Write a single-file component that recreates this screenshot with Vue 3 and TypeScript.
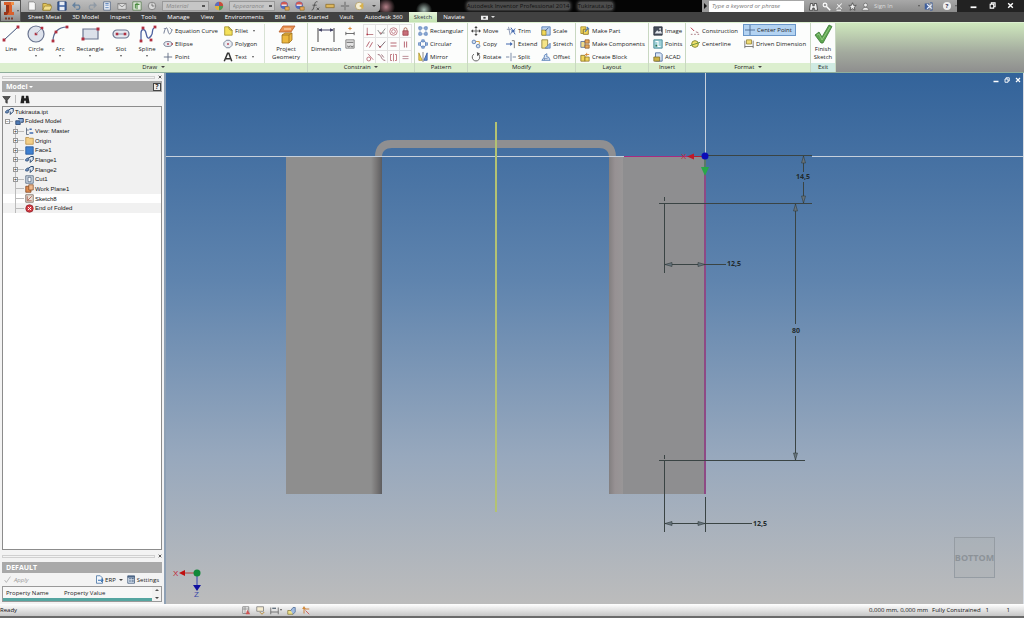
<script setup lang="ts">
import { h, ref } from 'vue'

/* A shape is [path data, fill, stroke, stroke width]. */
type Shape = [string, string, string?, number?]

const navy = '#3c5078'
const red = '#b03040'
const blue = '#4f79b5'

const dot = (x: number, y: number, r = 1): string =>
  `M${x - r} ${y - r}h${2 * r}v${2 * r}h${-2 * r}z`
const ring = (x: number, y: number, r: number): string =>
  `M${x - r} ${y}a${r} ${r} 0 1 0 ${2 * r} 0a${r} ${r} 0 1 0 ${-2 * r} 0z`

const icons: Record<string, Shape[]> = {
  /* large, 20 x 20 */
  line: [['M3 16L17 3', 'none', navy, 1], [dot(3, 16, 1.4), red], [dot(17, 3, 1.4), red]],
  circle: [[ring(10, 10, 8), '#dde2ec', '#6a7590', 1.2], [dot(10, 10, 1.3), red], ['M10 10l5 -5', 'none', '#8a93a8', 0.8], [dot(16, 4, 1.3), red]],
  arc: [['M3 17C3 9 8 3 17 3', 'none', '#5a6b92', 1.2], [dot(3, 17, 1.4), red], [dot(6, 8, 1.4), red], [dot(17, 3, 1.4), red]],
  rectangle: [['M3 5h15v10h-15z', '#dce1ea', '#6b7690', 1.2], [dot(3, 15, 1.5), red], [dot(18, 5, 1.5), red]],
  slot: [['M6 6h8a4 4 0 0 1 0 8h-8a4 4 0 0 1 0 -8z', '#e4e8ef', '#6b7690', 1.2], ['M6 10h8', 'none', '#8a93a8', 1], [dot(6, 10, 1.3), red], [dot(14, 10, 1.3), red]],
  spline: [['M4 17V9C4 5 8 4 9 9S11 16 14 12S14 6 17 4', 'none', '#4d62a0', 1.3], [dot(4, 17, 1.4), red], [dot(6, 4, 1.4), red], [dot(14, 16, 1.4), red], [dot(18, 3, 1.4), red]],
  project: [['M7 2h12l-4 6h-12z', '#e99252', '#b8602b', 0.8], ['M8 5h7', 'none', '#f8d0a8', 1.4], ['M6 11l3 -2h7v7l-3 3h-7z', '#edb83f', '#9c6f1e', 0.8], ['M6 11h7v8M13 11l3 -2', 'none', '#9c6f1e', 0.8]],
  dimension: [['M2 4v14M18 4v14', 'none', '#555', 1.1], ['M3 6h14', 'none', '#446', 1], ['M2 6l4 -1.8v3.6zM18 6l-4 -1.8v3.6z', '#446']],
  finish: [['M2 11l4 -3l3 5L16 1l3 1.5L10 19h-2z', '#5fa650', '#387a33', 0.8], ['M4 11l2 -1l3 6L17 3', 'none', '#9ad08a', 0.8]],
  /* small, 12 x 12 */
  eqcurve: [['M1 9C3 0 5 1 6 6S9 11 11 4', 'none', '#68738c', 1.1], ['M1 3h3M8 2l3 3', 'none', '#68738c', 0.8]],
  ellipse: [['M1 6a5 3 0 1 0 10 0a5 3 0 1 0 -10 0z', '#e8ebf1', '#68738c', 1], [dot(6, 6), red], [dot(11, 6, 0.8), red]],
  point: [['M6 1v10M1 6h10', 'none', '#56617c', 1]],
  fillet: [['M2 1h5l4 4v6h-9z', '#f4e15a', '#a3922c', 1], ['M7 1c0 3 1 4 4 4', 'none', '#7f7642', 1]],
  polygon: [['M4 1.5h4l3 3v3l-3 3h-4l-3 -3v-3z', '#e9ecf2', '#68738c', 1], [dot(6, 6), red]],
  textA: [['M1.5 11L5.5 1.5H7L10.5 11M3.5 8h5', 'none', '#333', 1.8]],
  dimAuto: [['M1 9h10M1 7v4M11 7v4', 'none', '#555', 1], ['M6 1v4M4 3h4', 'none', '#d98c3a', 1.2]],
  dimShow: [['M1 1h10v10h-10z', '#e3e3e3', '#777', 1], ['M2 4h8M3 8a1.3 1.3 0 1 0 3 0M7 8a1.3 1.3 0 1 0 3 0', 'none', '#555', 1]],
  cCoin: [['M3 1v9h8', 'none', '#b06a72', 1.1], [dot(3, 10), red]],
  cCol: [['M1 4l4 6L11 2M7 8h3', 'none', '#777', 1.1], [dot(5, 8, 0.8), red]],
  cConc: [[ring(6, 6, 5), 'none', '#b6606c', 1], [ring(6, 6, 2.5), 'none', '#b6606c', 1]],
  cFix: [['M2.5 5h7v6h-7z', '#c8707a', '#9c3c48', 1], ['M4 5V3a2 2 0 0 1 4 0v2', 'none', '#9c5c48', 1.1]],
  cPar: [['M2 9l4 -7M6 10l4 -7', 'none', '#b05864', 1.2]],
  cPerp: [['M1 6l3 4L11 2', 'none', '#75606a', 1.2], [dot(4, 9, 0.9), red]],
  cHor: [['M2 4h8M2 8h8', 'none', '#b05864', 1.2]],
  cVer: [['M4.5 2v8M7.5 2v8', 'none', '#b05864', 1.2]],
  cTan: [[ring(5, 8, 2.6), 'none', '#b05864', 1], ['M4 1l7 8', 'none', '#b05864', 1]],
  cSmooth: [['M1 2C7 2 4 9 11 10M6 2l3 4', 'none', '#8a5864', 1.1]],
  cSym: [['M4 2H2v8h2M8 2h2v8H8M6 1v10', 'none', '#b05864', 1]],
  cEq: [['M2 4.5h8M2 7.5h8', 'none', '#b07884', 1.1]],
  patRect: [['M1 1h3v3h-3zM8 1h3v3h-3zM1 8h3v3h-3zM8 8h3v3h-3z', '#9db8e0', blue, 0.9], ['M5 2.5h2M5 9.5h2M2.5 5v2M9.5 5v2', 'none', blue, 0.8]],
  patCirc: [[ring(6, 6, 3.6), 'none', '#708cc0', 1], ['M4.5 1h3v2.5h-3zM4.5 8.5h3v2.5h-3zM.5 4.5h2.5v3h-2.5zM9 4.5h2.5v3h-2.5z', '#9db8e0', blue, 0.8]],
  mirror: [['M1 1l4 9H1z', '#f0d654', '#a88e28', 0.9], ['M11 1L7 10h4z', '#5f8cd4', '#2e539c', 0.9], ['M6 0v12', 'none', '#555', 0.8]],
  move: [['M6 1v10M1 6h10', 'none', '#555', 1], ['M6 0l2 2.5H4zM6 12l2 -2.5H4zM0 6l2.5 -2v4zM12 6l-2.5 -2v4z', '#444']],
  copy: [[ring(3.5, 3.5, 2.2), '#cbdcf2', '#5878ac', 1], [ring(8.5, 8.5, 2.2), '#cbdcf2', '#5878ac', 1], ['M6 3h4v3', 'none', '#d09830', 1]],
  rotate: [['M3.5 2.5a4.5 4.5 0 1 0 5 0', 'none', '#555', 1.1], ['M7 0l4 2.2L7.5 5z', '#555']],
  trim: [['M1 4h5M3 1l2 10', 'none', '#8593b0', 1.1], ['M6 2l5 8M6 9l5 -6M6 6h5', 'none', '#3f65ac', 1.2]],
  extend: [['M0 6h6', 'none', '#3f65ac', 1.2], ['M5 3.5l3 2.5l-3 2.5z', '#3f65ac'], ['M7 2h3v9', 'none', '#777', 1.1]],
  split: [['M0 6h4M8 6h4M6 1v10', 'none', '#667799', 1]],
  scale: [['M1 1h10v10h-10z', '#b9d0ee', blue, 1], ['M1 5h5v6h-5z', '#f1d95a', '#a28a2c', 0.9], ['M5 6l4 -4', 'none', '#34568c', 1]],
  stretch: [['M1 1h7v10h-7z', '#f4e487', '#8a7c38', 1], ['M5 11L11 5v6z', '#9cbbe5', blue, 0.9]],
  offset: [['M1 10h10l-2 -4h-2v-4l-3 2v2z', '#dce7f5', blue, 1], ['M4 8h4M4 10V7', 'none', '#6a86b4', 1]],
  makePart: [['M1 1h6v3h-3v5h-3z', '#f1d55a', '#a28a2c', 1], ['M4 4h6v6h-6z', '#f1d55a', '#8b7428', 1], ['M8 1l3 3M6 7l4 -5', 'none', '#4f79b5', 1.4]],
  makeComp: [['M1 3h5v7h-5z', '#f1dc8a', '#5a6f9c', 1], ['M6 1h5v4h-5zM6 7h5v4h-5z', '#e7a85a', '#8c5a2c', 0.9]],
  block: [['M1 4h5v7h-5z', '#f1d55a', '#8b7428', 1], ['M6 6h5v5h-5z', '#f1d55a', '#8b7428', 0.9], ['M8 1v4M6 3h5', 'none', '#d98a38', 1.1]],
  image: [['M1 1h10v10h-10z', '#474f5c', '#2c333e', 1], ['M2 9l3 -4l2 2l2 -2l2 4z', '#e6e9ef'], [ring(8.5, 3.5, 1), '#fff']],
  points: [['M1 1h10v10h-10z', '#9fd0d8', '#3c8390', 1], ['M3 3h3v6h3', 'none', '#fff', 1.3], [dot(4, 8), '#2f6f46']],
  acad: [['M3 1h6l2 2v8h-8z', '#d9e5f5', '#48699c', 1], ['M1 6h7v5h-7z', '#cdb346', '#7b6a23', 0.9]],
  construction: [['M1 2l4 4', 'none', red, 1.1], ['M1 10h2M5 10h2M9 10h2M7 7l3 1', 'none', '#9d6870', 1]],
  centerline: [[ring(6, 6, 4), '#f1e16a', '#8b8f39', 1.2], ['M0 8L12 4', 'none', '#55853d', 1]],
  center: [['M6 0v12M0 6h12', 'none', '#45608a', 1]],
  driven: [['M1 2v9M11 2v9M1 9h10', 'none', '#666', 1], ['M3 1h6v5h-6z', '#f0dc74', '#8b7b32', 0.9]],
  /* browser tree */
  part: [['M0 7l3 -3h3l-2 4h-3z', '#6f8fbc', '#26456f', 1], ['M5 4l3 -2h3v4l-4 4V6', '#dfe8f3', '#26456f', 1.3]],
  folded: [['M1 5h6v5h-6z', '#4e7ab4', '#213c66', 1], ['M4 2h7v5h-3', '#89a9d4', '#213c66', 1.2]],
  view: [['M2 1v9h3M2 4h3', 'none', '#44546c', 1], ['M6 8h5M6 3h3', 'none', '#3f6bb0', 1.8]],
  folder: [['M1 2h4l1 1h5v8h-10z', '#f3cf88', '#b68b3f', 1]],
  face: [['M1 1h10v10h-10z', '#3f80d0', '#204f90', 1]],
  cut: [['M1 1h10v10h-10z', '#cfd9e4', '#4c5f78', 1], ['M4 3h4v6h-4z', '#fff', '#4c5f78', 1]],
  plane: [['M1 3h7v8h-7z', '#de8a4e', '#7c4420', 1], ['M5 1h6v7h-6z', '#efb88c', '#7c4420', 0.9]],
  sketch: [['M1 1h10v10h-10z', '#e7ded6', '#6c5c50', 1], ['M3 3v6h6M4 8l5 -5', 'none', '#a44a38', 1]],
  end: [[ring(6, 6, 5), '#d33c44', '#8b2028', 1], ['M4 4l4 4M8 4l-4 4', 'none', '#fff', 1.3]],
  filter: [['M1 2h10L7 7v4l-2 -1V7z', '#555', '#222', 0.8]],
  binoc: [['M2 2h3v3h2V2h3l1.5 9H7V8H5v3H.5z', '#222']],
  apply: [['M1 7l3 4L11 1', 'none', '#a8a8a8', 1.3]],
  erp: [['M2 1h5l3 3v7h-8z', '#f3f7fc', '#3c6a9c', 1], ['M4 7h6M8 5l3 2l-3 2', 'none', '#2c6ab0', 1.3]],
  settings: [['M1 1h9v10h-9z', '#dbe6f2', '#3d5677', 1], ['M1 2.5h9M3 5h2M3 8h2M6 5h3M6 8h3', 'none', '#28456c', 1.4]],
  /* title bar */
  newDoc: [['M2 1h6l2 2v8h-8z', '#f6f6f6', '#777', 0.9]],
  open: [['M1 3h4l1 1h4v7h-9z', '#e8c95a', '#8b7428', 0.9], ['M3 6h9l-2 5h-9z', '#f3df8c', '#8b7428', 0.8]],
  save: [['M1 1h10v10h-10z', '#3c5f9e', '#233e70', 1], ['M3 1h6v4h-6zM3 7h6v4h-6z', '#e8edf5']],
  undo: [['M2 5h6a3 3 0 0 1 0 5H5', 'none', '#66829f', 1.6], ['M0 5l4 -4v8z', '#66829f']],
  redo: [['M10 5H4a3 3 0 0 0 0 5h3', 'none', '#909aa5', 1.4], ['M12 5L8 1v8z', '#909aa5']],
  sheet: [['M2 1h8v10h-8z', '#e8edf5', '#5b6d88', 1], ['M4 3h4M4 5h4M4 8h4', 'none', blue, 1]],
  mail: [['M1 3h10v7h-10z', '#dcdcdc', '#777', 0.9], ['M1 3l5 4l5 -4', 'none', '#777', 0.9]],
  update: [['M1 1h10v10h-10z', '#e3ecdf', '#5c8053', 1], ['M4 9V4h5M6 2v8', 'none', '#4a8a40', 1.3]],
  clock: [[ring(6, 6, 4.5), '#d8d8d8', '#777', 1], ['M6 3v3h3', 'none', '#666', 1]],
  ball: [[ring(6, 6, 5), '#e0b23c'], ['M6 1a5 5 0 0 1 5 5H6z', '#c64b3f'], ['M1 6a5 5 0 0 1 5 -5v5z', '#5b6cc0'], ['M6 11a5 5 0 0 0 5 -5H6z', '#4d9a5a']],
  ballEdit: [[ring(5, 5, 4.5), '#506ac0'], ['M1 5a4 4 0 0 1 8 0z', '#d05a54'], ['M2 5h6', 'none', '#fff', 1.5], ['M6 7h5v4h-5z', '#e8a85a', '#8a6b20', 0.7]],
  cone: [[ring(5, 6, 4.5), '#f4edd2', '#a89050', 0.8], ['M5 6l5 -4v8z', '#d9b24c']],
  plus: [['M6 1v10M1 6h10', 'none', '#8b8b8b', 2.2]],
  fx: [['M9 1C6 0 6 3 5 6S4 11 2 11M3 5h5M8 8l3 3M11 8l-3 3', 'none', '#444', 1]],
  measure: [['M1 4h10v4h-10z', '#dcb65c', '#8b6c2a', 0.9]],
  binocLight: [['M2 2h3v3h2V2h3l1.5 9H7V8H5v3H.5z', '#f0f0f0', '#333', 1]],
  key: [[ring(4, 4, 2.5), 'none', '#fff', 1.5], ['M6 6l5 5', 'none', '#fff', 2]],
  dish: [['M2 9l7 -7M3 3l6 6M2 11h6', 'none', '#f4f4f4', 1.4]],
  star: [['M6 1l1.5 3.5H11L8.3 7l1 4L6 8.8L2.7 11l1 -4L1 4.5h3.5z', '#eee', '#444', 1]],
  user: [[ring(6, 4, 2.5), '#eee', '#555', 0.8], ['M1.5 11c0 -5 9 -5 9 0z', '#eee', '#555', 0.8]],
  exchange: [['M1 2h6v8h-6z', '#3f5f9c'], ['M4 3l7 6M11 3l-7 6', 'none', '#e8eefa', 1.6], ['M8 1h3v10h-3', 'none', '#3f5f9c', 1]],
  minimize: [['M1 9h10', 'none', '#fff', 3]],
  restore: [['M4 4V1.5h6.5V8H8M2 4h6v6.5h-6z', 'none', '#fff', 1.8]],
  close: [['M2 2l8 8M10 2l-8 8', 'none', '#fff', 2.4]],
  closeDark: [['M2 2l8 8M10 2l-8 8', 'none', '#222', 2.2]],
  tabBox: [['M0 3h12v7h-12z', '#eee'], ['M4 5h4v3h-4z', '#444']],
  /* status bar */
  stGrid: [['M1 1h8v9h-8z', '#f2f2f2', '#777', 1], ['M1 4h8M4 1v9', 'none', '#777', 0.9], ['M7 5l4 6H5z', '#c55']],
  stSnap: [['M1 1h9v6h-9z', '#f5ecd0', '#777', 1], ['M5 8l3 3l3 -3', 'none', '#b8862c', 1.2]],
  stDim: [['M1 2v9M11 2v9M1 8h10', 'none', '#555', 1], ['M3 3h5', 'none', '#456', 1.5]],
  stSlice: [['M1 6h7v5h-7z', '#efe28c', '#7a6d30', 0.9], ['M5 6l3 -4h3v6l-3 3', '#9fb9e0', '#40608c', 0.9]],
  stDof: [['M4 10V4h7', 'none', '#c9772c', 1.2], ['M4 0l2.5 4h-5z', '#d08838'], ['M6 6l5 5', 'none', '#c55', 1.2]],
}

const largeNames = ['line', 'circle', 'arc', 'rectangle', 'slot', 'spline', 'project', 'dimension', 'finish']

const Icon = (props: { name: string; size?: number | string }) => {
  const box = largeNames.includes(props.name) ? 20 : 12
  const size = props.size ?? (box === 20 ? 20 : 10)
  return h(
    'svg',
    { width: size, height: size, viewBox: `0 0 ${box} ${box}`, 'aria-hidden': 'true' },
    icons[props.name].map(([d, fill, stroke, width]) =>
      h('path', { d, fill, stroke: stroke ?? 'none', 'stroke-width': width ?? 0 }),
    ),
  )
}
Icon.props = ['name', 'size']

interface Tool { icon: string; label: string; menu?: boolean; on?: boolean }
const t = (icon: string, label: string, menu = false, on = false): Tool => ({ icon, label, menu, on })

const tabs = ['Sheet Metal', '3D Model', 'Inspect', 'Tools', 'Manage', 'View', 'Environments', 'BIM', 'Get Started', 'Vault', 'Autodesk 360', 'Sketch', 'Naviate']
const activeTab = ref('Sketch')

const drawLarge = [t('line', 'Line'), t('circle', 'Circle', true), t('arc', 'Arc', true), t('rectangle', 'Rectangle', true), t('slot', 'Slot', true), t('spline', 'Spline', true)]
const drawSmall = [
  [t('eqcurve', 'Equation Curve'), t('ellipse', 'Ellipse'), t('point', 'Point')],
  [t('fillet', 'Fillet', true), t('polygon', 'Polygon'), t('textA', 'Text', true)],
]
const constraints = [
  ['cCoin', 'Coincident'], ['cCol', 'Collinear'], ['cConc', 'Concentric'], ['cFix', 'Fix'],
  ['cPar', 'Parallel'], ['cPerp', 'Perpendicular'], ['cHor', 'Horizontal'], ['cVer', 'Vertical'],
  ['cTan', 'Tangent'], ['cSmooth', 'Smooth'], ['cSym', 'Symmetric'], ['cEq', 'Equal'],
]
const groups = [
  { name: 'Pattern', key: 'pattern', menu: false, columns: [[t('patRect', 'Rectangular'), t('patCirc', 'Circular'), t('mirror', 'Mirror')]] },
  { name: 'Modify', key: 'modify', menu: false, columns: [
    [t('move', 'Move'), t('copy', 'Copy'), t('rotate', 'Rotate')],
    [t('trim', 'Trim'), t('extend', 'Extend'), t('split', 'Split')],
    [t('scale', 'Scale'), t('stretch', 'Stretch'), t('offset', 'Offset')],
  ] },
  { name: 'Layout', key: 'layout', menu: false, columns: [[t('makePart', 'Make Part'), t('makeComp', 'Make Components'), t('block', 'Create Block')]] },
  { name: 'Insert', key: 'insert', menu: false, columns: [[t('image', 'Image'), t('points', 'Points'), t('acad', 'ACAD')]] },
  { name: 'Format', key: 'format', menu: true, columns: [
    [t('construction', 'Construction'), t('centerline', 'Centerline')],
    [t('center', 'Center Point', false, true), t('driven', 'Driven Dimension')],
  ] },
]

const tree = [
  { icon: 'part', label: 'Tukirauta.ipt', level: 0, box: '' },
  { icon: 'folded', label: 'Folded Model', level: 1, box: '−' },
  { icon: 'view', label: 'View: Master', level: 2, box: '+' },
  { icon: 'folder', label: 'Origin', level: 2, box: '+' },
  { icon: 'face', label: 'Face1', level: 2, box: '+' },
  { icon: 'part', label: 'Flange1', level: 2, box: '+' },
  { icon: 'part', label: 'Flange2', level: 2, box: '+' },
  { icon: 'cut', label: 'Cut1', level: 2, box: '+' },
  { icon: 'plane', label: 'Work Plane1', level: 2, box: '' },
  { icon: 'sketch', label: 'Sketch8', level: 2, box: '' },
  { icon: 'end', label: 'End of Folded', level: 2, box: '' },
]
const selected = ref('Sketch8')

const quick = ['newDoc', 'open', 'save', 'undo', 'redo', 'sheet', 'mail', 'update', 'clock']
const quickRight = ['ballEdit', 'fx', 'measure', 'plus', 'cone']
const material = ref('Material')
const appearance = ref('Appearance')
const search = ref('')
const statusTools = ['stGrid', 'stSnap', 'stDim', 'stSlice', 'stDof']
</script>

<template>
  <div class="window">
    <header class="top">
      <button class="app" aria-label="Application menu">
        <svg width="14" height="20" viewBox="0 0 14 20" aria-hidden="true">
          <path d="M2 1h10v3h-2v7h2v3H2v-3h2V4H2z" fill="#d9602c" />
          <path d="M4 4h3v7H4zM2 11h5l-2 3H2z" fill="#98351a" />
          <path d="M9 1h3v3h-3z" fill="#f09048" />
          <path d="M3 17.500h8" stroke="#7c3c2c" stroke-width="2" stroke-dasharray="2 1" />
        </svg>
        <i class="caret"></i>
      </button>
      <div class="bars">
        <div class="title-bar">
          <div class="quick">
            <button v-for="q in quick" :key="q" :aria-label="q"><Icon :name="q" /></button>
            <select v-model="material" aria-label="Material"><option>Material</option></select>
            <Icon name="ball" />
            <select v-model="appearance" aria-label="Appearance"><option>Appearance</option></select>
            <Icon name="ballEdit" />
            <button v-for="q in quickRight" :key="q" :aria-label="q"><Icon :name="q" /></button>
            <i class="caret dark"></i>
          </div>
          <div class="caption">
            <span>Autodesk Inventor Professional 2014</span><span>Tukirauta.ipt</span>
          </div>
          <div class="info">
            <button class="expand" aria-label="Collapse search"><i class="arrow"></i></button>
            <input v-model="search" type="search" placeholder="Type a keyword or phrase" aria-label="Search" />
            <button v-for="q in ['binocLight', 'key', 'dish', 'star', 'user']" :key="q" :aria-label="q"><Icon :name="q" size="9" /></button>
            <button class="sign">Sign In</button>
            <i class="caret"></i>
            <button aria-label="Exchange"><Icon name="exchange" size="9" /></button>
            <button class="help" aria-label="Help">?</button>
            <i class="caret"></i>
          </div>
          <div class="window-buttons">
            <button v-for="q in ['minimize', 'restore', 'close']" :key="q" :aria-label="q"><Icon :name="q" size="7" /></button>
          </div>
        </div>
        <nav class="tabs">
          <button v-for="tab in tabs" :key="tab" :class="{ active: tab === activeTab }" @click="activeTab = tab">{{ tab }}</button>
          <button class="tab-extra" aria-label="Ribbon display"><Icon name="tabBox" size="7" /><i class="caret light"></i></button>
        </nav>
      </div>
    </header>

    <section class="ribbon">
      <div class="group draw">
        <div class="tools">
          <div class="draw-large">
            <button v-for="b in drawLarge" :key="b.label" class="large">
              <Icon :name="b.icon" /><span>{{ b.label }}</span><i v-if="b.menu" class="caret"></i>
            </button>
          </div>
          <div v-for="(col, i) in drawSmall" :key="i" class="column">
            <button v-for="b in col" :key="b.label" class="small"><Icon :name="b.icon" />{{ b.label }}<i v-if="b.menu" class="caret"></i></button>
          </div>
          <button class="large project"><Icon name="project" /><span>Project</span><span>Geometry</span></button>
        </div>
        <h2>Draw <i class="caret dark"></i></h2>
      </div>
      <div class="group constrain">
        <div class="tools">
          <button class="large dim"><Icon name="dimension" /><span>Dimension</span></button>
          <div class="column pair">
            <button class="small" aria-label="Automatic dimensions"><Icon name="dimAuto" /></button>
            <button class="small" aria-label="Show constraints"><Icon name="dimShow" /></button>
          </div>
          <div class="matrix">
            <button v-for="c in constraints" :key="c[0]" :aria-label="c[1]"><Icon :name="c[0]" size="9" /></button>
          </div>
        </div>
        <h2>Constrain <i class="caret dark"></i></h2>
      </div>
      <div v-for="g in groups" :key="g.key" class="group" :class="g.key">
        <div class="tools">
          <div v-for="(col, i) in g.columns" :key="i" class="column">
            <button v-for="b in col" :key="b.label" class="small" :class="{ on: b.on }"><Icon :name="b.icon" />{{ b.label }}</button>
          </div>
        </div>
        <h2>{{ g.name }} <i v-if="g.menu" class="caret dark"></i></h2>
      </div>
      <div class="group exit">
        <div class="tools">
          <button class="large"><Icon name="finish" /><span>Finish</span><span>Sketch</span></button>
        </div>
        <h2>Exit</h2>
      </div>
    </section>

    <main>
      <aside>
        <div class="grip"><hr /><button aria-label="Close model browser"><Icon name="closeDark" size="4" /></button></div>
        <div class="panel-title"><span>Model <i class="caret white"></i></span><button class="panel-help" aria-label="Help">?</button></div>
        <div class="panel-tools">
          <button aria-label="Filter"><Icon name="filter" size="9" /></button>
          <hr />
          <button aria-label="Find"><Icon name="binoc" size="10" /></button>
        </div>
        <div class="browser">
          <ul>
            <li v-for="n in tree" :key="n.label" :class="['level' + n.level, { selected: n.label === selected }]" @click="selected = n.label">
              <span v-if="n.level" class="branch"><b v-if="n.box">{{ n.box }}</b></span>
              <Icon :name="n.icon" size="9" />{{ n.label }}
            </li>
          </ul>
        </div>
        <div class="grip second"><hr /><button aria-label="Close properties"><Icon name="closeDark" size="4" /></button></div>
        <div class="panel-title"><span>DEFAULT</span></div>
        <div class="property-tools">
          <button class="apply" disabled><Icon name="apply" size="7" />Apply</button>
          <button><Icon name="erp" size="9" />ERP <i class="caret dark"></i></button>
          <button><Icon name="settings" size="9" />Settings</button>
        </div>
        <div class="properties">
          <table><thead><tr><th>Property Name</th><th>Property Value</th></tr></thead></table>
          <div class="scroll"><i class="caret up"></i><i class="caret dark"></i></div>
        </div>
      </aside>

      <section class="viewport">
        <svg class="scene" viewBox="166 73 858 531" preserveAspectRatio="xMinYMin slice" role="img" aria-label="Sketch view">
          <defs>
            <linearGradient id="bend-left"><stop offset="0" stop-color="#8e8e8e" /><stop offset=".5" stop-color="#787676" /><stop offset="1" stop-color="#5d5d60" /></linearGradient>
            <linearGradient id="bend-right"><stop offset="0" stop-color="#827f80" /><stop offset=".4" stop-color="#979193" /><stop offset="1" stop-color="#999798" /></linearGradient>
          </defs>
          <path d="M375 157C375 146 381 140 391 140H600C610 140 616 146 616 157H609C609 151 605 148 599 148H392C386 148 382 151 382 157Z" fill="#8f8f91" />
          <rect x="286" y="156" width="86" height="338" fill="#8e8e8e" />
          <rect x="371" y="156" width="11" height="338" fill="url(#bend-left)" />
          <rect x="609" y="156" width="15" height="338" fill="url(#bend-right)" />
          <rect x="623" y="156" width="82" height="338" fill="#8e8e90" />
          <path d="M166 156.500H624M812 156.500H1024M705.500 73V156" stroke="#c6d0dc" fill="none" />
          <path d="M624 156.500H705" stroke="#a82c80" />
          <path d="M705 156V494" stroke="#8e4a84" stroke-width="2" />
          <path d="M496 122V512" stroke="#b3c273" stroke-width="2" />
          <path d="M705 155.500H812M803.500 156V172M803.500 182V203M659 203.500H812M664.500 197V201M664.500 203V273M664.500 264.500H726M795.500 204V324M795.500 336V460M659 460.500H805M664.500 455V459M664.500 461V532M705.500 497V532M664.500 523.500H752" stroke="#3a4444" fill="none" />
          <g fill="#66737c" stroke="#333c3c" stroke-width=".6">
            <path d="M803.500 156l-2 7h4zM803.500 203l-2-7h4zM795.500 204l-2 7h4zM795.500 460l-2-7h4zM665 264.500l7-2v4zM705 264.500l-7-2v4zM665 523.500l7-2v4zM705 523.500l-7-2v4z" />
          </g>
          <g class="dim-text">
            <text x="803" y="179">14,5</text><text x="734" y="266">12,5</text><text x="796" y="333">80</text><text x="760" y="526">12,5</text>
          </g>
          <path d="M689 156.500H704" stroke="#b02038" /><path d="M687 156.500l7-3v6z" fill="#c01828" />
          <path d="M705 159V168" stroke="#28a848" /><path d="M705 176l-4-9h8z" fill="#28a848" />
          <circle cx="705" cy="156" r="3.500" fill="#0c0cb8" />
          <text x="681" y="159" class="axis red">X</text>
          <path d="M183 573H195" stroke="#b04040" /><path d="M179 573l6-3v6z" fill="#c01010" />
          <path d="M197 574V586" stroke="#3040b0" /><path d="M197 591l-4-6h8z" fill="#1010a0" />
          <circle cx="197" cy="573" r="3.500" fill="#108838" />
          <text x="173" y="576" class="axis red">X</text><text x="194" y="597" class="axis blue">Z</text>
        </svg>
        <div class="document-buttons">
          <button v-for="q in ['minimize', 'restore', 'close']" :key="q" :aria-label="'Document ' + q"><Icon :name="q" size="6" /></button>
        </div>
        <button class="cube">BOTTOM</button>
      </section>
    </main>

    <footer>
      <span class="ready">Ready</span>
      <div class="status-tools">
        <button v-for="s in statusTools" :key="s" :aria-label="s"><Icon :name="s" size="9" /><i v-if="s === 'stDim'" class="caret"></i></button>
      </div>
      <span class="coords">0,000 mm, 0,000 mm</span><span>Fully Constrained</span><span class="count">1</span><span class="count">1</span>
    </footer>
  </div>
</template>

<style>
body { background: #666; overflow: hidden; }
</style>

<style scoped>
* { box-sizing: border-box; }
.window { display: flex; flex-direction: column; min-height: 100vh; font: 6px/8px "Open Sans", "Noto Sans", sans-serif; color: #222; background: #f2f2f2; border-bottom: 2px solid #6a6a6a; }
button { margin: 0; padding: 0; border: 0; background: none; font: inherit; color: inherit; display: flex; align-items: center; justify-content: center; white-space: nowrap; }
svg { flex: none; display: block; }
hr { margin: 0; border: 0; }
.caret { display: inline-block; flex: none; width: 0; height: 0; border: 1px solid transparent; border-top: 2px solid #555; border-bottom: 0; }
.caret.dark { border-width: 2px 2px 0; border-top-color: #444; vertical-align: middle; margin-left: 2px; }
.caret.white { border-width: 2px 2px 0; border-top-color: #fff; vertical-align: middle; }
.caret.light { border-width: 2px 2px 0; border-top-color: #ddd; }
.caret.up { border-width: 0 2px 2px; border-bottom: 2px solid #555; }

.top { display: flex; height: 22px; background: #3e3e3e; }
.app { gap: 1px; width: 21px; background: linear-gradient(#d8d8d8, #8a8a8a); border: 1px solid #555; }
.bars { flex: 1; min-width: 0; display: flex; flex-direction: column; }
.title-bar { display: flex; height: 12px; background: #050505; }
.quick { display: flex; align-items: center; gap: 5px; width: 359px; padding: 0 4px 0 6px; background: linear-gradient(#bdbdbd, #a4a4a4); border-radius: 0 0 4px 0; }
.quick button { width: 10px; height: 11px; }
.quick select { appearance: none; width: 51px; height: 10px; padding: 0 3px; border: 1px solid #999; border-radius: 0; background: linear-gradient(#555, #555) 95% 50% / 3px 2px no-repeat #c6c6c6; color: #888; font: italic 6px/8px "Open Sans", sans-serif; }
.caption { flex: 1; display: flex; align-items: center; justify-content: flex-end; gap: 8px; padding-right: 89px; color: #111; background: radial-gradient(circle at 6px 7px, #b48088 0, transparent 9px), radial-gradient(circle at 44px 10px, #a8bcb4 0, transparent 8px), #050505; white-space: nowrap; }
.caption span { background: #4c4c4c; box-shadow: 0 0 3px 1px #4c4c4c; border-radius: 3px; }
.info { display: flex; align-items: center; gap: 4px; width: 255px; background: linear-gradient(#a8a8a8, #8c8c8c); color: #eee; }
.expand { width: 7px; height: 12px; background: #999; }
.arrow { border: 3px solid transparent; border-left-color: #111; border-right: 0; }
.info input { width: 95px; min-width: 0; height: 11px; margin: 0 1px 0 -4px; padding: 0 3px; border: 0; border-radius: 0; background: #fff; font: italic 6px/8px "Open Sans", sans-serif; }
.info input::placeholder { color: #777; opacity: 1; }
.sign { color: #ddd; }
.sign + .caret { margin-left: auto; }
.info .help { width: 8px; height: 8px; margin-left: 6px; border-radius: 50%; background: #eee; color: #335; font-weight: bold; }
.window-buttons { display: flex; width: 67px; justify-content: space-between; padding: 0 10px 2px 13px; background: #222; }
.tabs { display: flex; gap: 1px; height: 10px; padding-left: 2px; background: #414141; color: #fff; }
.tabs button { padding: 0 5px; }
.tabs .active { background: linear-gradient(#e6f4dc, #c2e2b0); color: #334; }
.tabs .tab-extra { gap: 3px; margin-left: 5px; }

.ribbon { display: flex; height: 51px; background: linear-gradient(#cfe8bd, #a3aa9e 60%, #8e8e8e); border-top: 1px solid #dcefd0; border-bottom: 1px solid #8fae9c; }
.group { display: flex; flex-direction: column; border-right: 1px solid #c9d8c2; background: #fcfdfc; }
.group h2 { height: 9px; margin: 0; font: inherit; text-align: center; background: #dcefcf; }
.tools { flex: 1; display: flex; padding-top: 1px; }
.draw { width: 308px; }
.draw-large { display: grid; grid-template-columns: 22px 28px 20px 40px 22px 30px; }
.large { flex-direction: column; justify-content: flex-start; }
.large svg { margin-bottom: 1px; }
.large .caret { margin-top: 2px; }
.column { display: grid; grid-template-rows: repeat(3, 13px); justify-items: start; align-content: start; }
.small { gap: 2px; }
.small .caret { margin-left: 3px; }
.draw .column { width: 60px; padding-left: 1px; }
.draw .column + .column { width: 42px; }
.project { flex: 1; border-left: 1px solid #d8e2d4; }
.constrain { width: 107px; }
.dim { width: 36px; }
.pair { width: 19px; padding-left: 1px; }
.matrix { display: grid; grid-template: repeat(3, 13px) / repeat(4, 12px); align-content: start; }
.matrix button { border: 1px solid #e2e2e2; margin: 0 -1px -1px 0; }
.pattern { width: 53px; }
.pattern .column { padding-left: 3px; }
.modify { width: 108px; }
.modify .column { width: 35px; padding-left: 3px; }
.layout { width: 73px; }
.layout .column, .insert .column { padding-left: 4px; }
.insert { width: 37px; }
.format { width: 125px; }
.format .column { width: 54px; padding-left: 4px; }
.format .column + .column { width: 70px; }
.on { height: 12px; margin-left: -1px; padding: 0 3px 0 1px; border: 1px solid #6a97c9; background: #b3d3f2; }
.exit { width: 25px; }
.exit .large { flex: 1; }
.exit h2 { background: #cfeae2; }

main { flex: 1; display: flex; min-height: 0; }
aside { display: flex; flex-direction: column; width: 166px; padding: 0 2px 2px; background: #f3f3f3; border-right: 2px solid #8ea0b4; }
.grip { display: flex; align-items: center; height: 8px; gap: 3px; }
.grip hr { flex: 1; height: 3px; border: 1px solid #d0d0d0; }
.grip.second { height: 12px; }
.panel-title { display: flex; align-items: center; justify-content: space-between; height: 11px; padding: 0 1px 0 4px; background: #a9a9a9; color: #fff; font: bold 7px/8px "Open Sans", sans-serif; }
.panel-help { width: 8px; height: 8px; border: 1px solid #444; background: #eee; color: #333; font-weight: bold; }
.panel-tools { display: flex; align-items: center; gap: 4px; height: 14px; }
.panel-tools hr { width: 1px; height: 8px; background: #bbb; }
.browser { flex: 1; border: 1px solid #8c8c8c; background: #fff; }
ul { display: grid; grid-auto-rows: 1fr; height: 106px; margin: 0; padding: 0; list-style: none; font: 6px/8px "Liberation Sans", Arial, sans-serif; background: #f1f1f1; }
li { display: flex; align-items: center; gap: 1px; color: #111; padding-left: 2px; }
.level2 { padding-left: 12px; }
.level2 .branch { border-left: 1px solid #bbb; }
.selected { background: #fff; }
.branch { display: flex; align-items: center; align-self: stretch; width: 9px; background: linear-gradient(#bbb, #bbb) 0 50% / 8px 1px no-repeat; }
.branch b { width: 5px; height: 5px; margin-left: -3px; border: 1px solid #999; background: #fff; font: 5px/3px "Liberation Sans", sans-serif; text-align: center; }
.level1 .branch b { margin-left: 0; }
.property-tools { display: flex; align-items: center; gap: 4px; height: 13px; padding: 0 3px 0 2px; }
.property-tools button { gap: 1px; }
.property-tools .apply { margin-right: auto; color: #999; font-style: italic; gap: 3px; }
.properties { display: flex; height: 16px; border: 1px solid #999; background: #fff; }
table { flex: 1; border-collapse: collapse; border-bottom: 3px solid #55a5a0; table-layout: fixed; }
th { padding: 0 3px; font-weight: normal; text-align: left; background: #f7f7f7; width: 58px; white-space: nowrap; }
th + th { width: auto; }
.scroll { display: flex; flex-direction: column; align-items: center; justify-content: space-between; width: 9px; padding: 2px 0; background: #f2f2f2; }
.scroll .caret { margin: 0; }

.viewport { position: relative; flex: 1; min-width: 0; background: linear-gradient(#33639a, #5f84ae 39%, #97a8bd 72%, #bcbcbc); border-right: 1px solid #d8dde4; overflow: hidden; }
.scene { position: absolute; inset: 0; width: 100%; height: 100%; }
.dim-text { font: bold 7px "Open Sans", sans-serif; fill: #222a2c; text-anchor: middle; }
.axis { font: 8px "Liberation Sans", sans-serif; }
.axis.red { fill: #c02838; }
.axis.blue { fill: #3848a8; }
.document-buttons { position: absolute; top: 4px; right: 2px; display: flex; gap: 5px; }
.cube { position: absolute; right: 28px; bottom: 26px; width: 41px; height: 41px; border: 1px solid #959ca3; color: #8c9298; background: #a9adb155; font: bold 9px/10px "Open Sans", sans-serif; }

footer { display: flex; align-items: center; height: 12px; padding-right: 14px; background: linear-gradient(#fff, #c6c6c6); color: #111; }
.ready { width: 242px; }
.status-tools { display: flex; gap: 5px; margin-right: auto; }
.status-tools button { gap: 1px; }
.coords { margin-right: 4px; }
.count { width: 10px; margin-left: 5px; }
.count + .count { width: auto; margin-left: 11px; }
</style>
